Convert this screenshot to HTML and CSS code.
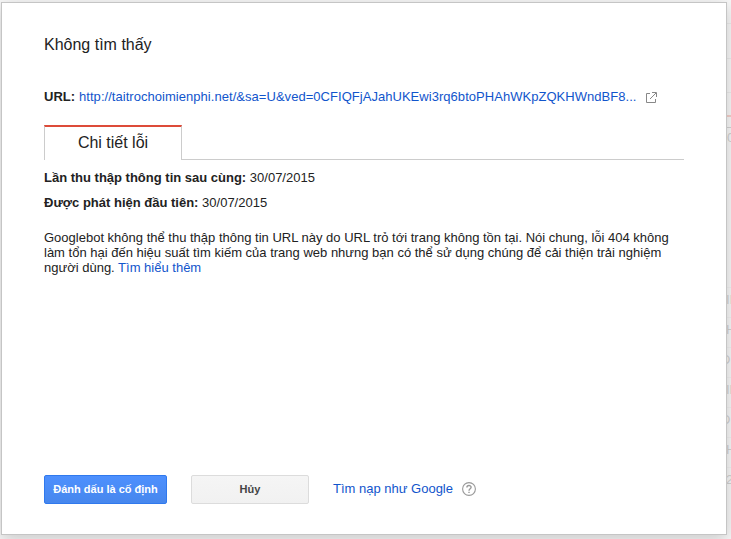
FILE: index.html
```html
<!DOCTYPE html>
<html lang="vi">
<head>
  <meta charset="UTF-8">
  <meta name="viewport" content="width=device-width, initial-scale=1.0">
  <title>Không tìm thấy</title>
  <link rel="stylesheet" href="styles.css">
</head>
<body>
  <!-- dimmed page behind the dialog -->
  <div class="backdrop">
    <div class="chart">
      <span class="axis-label">0</span>
    </div>
    <div class="rows">
      <div class="near">II</div>
      <div class="near">H</div>
      <div>D</div>
      <div class="near">ID</div>
      <div>D</div>
      <div class="near">H</div>
      <div class="near">2</div>
    </div>
  </div>

  <div class="dialog">
    <h1>Không tìm thấy</h1>
    <div class="url-row">
      <b>URL:</b>
      <a class="url" href="#">http://taitrochoimienphi.net/&amp;sa=U&amp;ved=0CFIQFjAJahUKEwi3rq6btoPHAhWKpZQKHWndBF8...</a>
      <svg class="open-icon" width="11" height="11" viewBox="0 0 11 11" fill="none" stroke="#888">
        <path d="M4 1.5H.5v9h9V7M6 .5h4.5V5M4 7l6-6"/>
      </svg>
    </div>
    <div class="tabs">
      <div class="tab">Chi tiết lỗi</div>
      <div class="tab-line"></div>
    </div>
    <p class="crawled"><b>Lần thu thập thông tin sau cùng:</b> <span>30/07/2015</span></p>
    <p class="detected"><b>Được phát hiện đầu tiên:</b> <span>30/07/2015</span></p>
    <div class="description">
      <div>Googlebot không thể thu thập thông tin URL này do URL trỏ tới trang không tồn tại. Nói chung, lỗi 404 không</div>
      <div>làm tổn hại đến hiệu suất tìm kiếm của trang web nhưng bạn có thể sử dụng chúng để cải thiện trải nghiệm</div>
      <div>người dùng. <a href="#">Tìm hiểu thêm</a></div>
    </div>
    <div class="actions">
      <button class="primary">Đánh dấu là cố định</button>
      <button class="cancel">Hủy</button>
      <a class="fetch" href="#">Tìm nạp như Google</a>
      <svg class="help-icon" width="14" height="14" viewBox="0 0 14 14" fill="none" stroke="#999">
        <circle cx="7" cy="7" r="6.4" stroke-width="1.1"/>
        <path d="M4.9 5.5c0-2.7 4.2-2.6 4.2-.2C9.1 6.8 7 6.8 7 8.7M7 9.7v1.4" stroke-width="1.4"/>
      </svg>
    </div>
  </div>
</body>
</html>
```

FILE: styles.css
```css
body {
  margin: 0;
  height: 539px;
  overflow: hidden;
  position: relative;
  background: #f8f8f8;
  color: #222;
  font-family: "Liberation Sans", Arial, sans-serif;
  font-size: 13px;
  line-height: 15px;
}
a {
  color: #15c;
  text-decoration: none;
}
p {
  margin: 0;
}
a, b, span, .tab, h1, .description div {
  white-space: nowrap;
}
.backdrop {
  position: absolute;
  top: 0;
  right: 0;
  width: 10px;
  height: 539px;
  overflow: hidden;
  color: #d2d2d2;
}
.chart {
  height: 285px;
  background:
    linear-gradient(#ececec, #ececec) 0 23px / 100% 1px no-repeat,
    linear-gradient(#ececec, #ececec) 0 58px / 100% 1px no-repeat,
    linear-gradient(#ececec, #ececec) 0 92px / 100% 1px no-repeat,
    linear-gradient(#f5d0ca, #f5d0ca) 0 115px / 100% 2px no-repeat,
    linear-gradient(#d4d4d4, #d4d4d4) 0 127px / 100% 1px no-repeat;
}
.axis-label {
  display: block;
  padding: 130px 0 0 6px;
}
.rows div {
  height: 30px;
  line-height: 30px;
  background: linear-gradient(#f1f1f1, #f1f1f1) 0 2px / 100% 1px no-repeat;
}
.rows .near {
  padding-left: 5px;
}
.dialog {
  position: relative;
  float: left;
  box-sizing: border-box;
  width: 726px;
  height: 533px;
  margin: 2px 0 0 1px;
  padding: 33px 42px 0;
  background: #fff;
  border: 1px solid #c5c5c5;
  box-shadow: 0 4px 16px rgba(0, 0, 0, 0.2);
}
h1 {
  margin: 0;
  font-size: 16px;
  font-weight: normal;
  line-height: 18px;
}
.url-row {
  display: flex;
  align-items: center;
  margin-top: 35px;
}
.url {
  width: 558px;
  margin-left: 4px;
  letter-spacing: 0.04px;
}
.open-icon {
  margin: 2px 0 0 9px;
}
.tabs {
  display: flex;
  height: 35px;
  margin-top: 21px;
}
.tab {
  box-sizing: border-box;
  width: 138px;
  border: 1px solid #ccc;
  border-top: 2px solid #dd4b39;
  border-bottom: 0;
  font-size: 16px;
  line-height: 32px;
  text-align: center;
}
.tab-line {
  flex: 1;
  border-bottom: 1px solid #ccc;
}
.crawled {
  margin-top: 10px;
}
.detected {
  margin-top: 10px;
}
.description {
  margin-top: 20px;
}
.actions {
  display: flex;
  align-items: center;
  margin-top: 200px;
}
button {
  box-sizing: border-box;
  height: 29px;
  padding: 0 0 2px;
  border-radius: 2px;
  font: bold 11px "Liberation Sans", Arial, sans-serif;
}
.primary {
  width: 123px;
  background: linear-gradient(#4d90fe, #4787ed);
  border: 1px solid #3079ed;
  color: #fff;
}
.cancel {
  width: 118px;
  margin-left: 24px;
  background: linear-gradient(#f5f5f5, #f1f1f1);
  border: 1px solid #dcdcdc;
  color: #444;
}
.fetch {
  width: 119px;
  margin: 0 0 2px 24px;
}
.help-icon {
  margin: 0 0 1px 10px;
}
```
